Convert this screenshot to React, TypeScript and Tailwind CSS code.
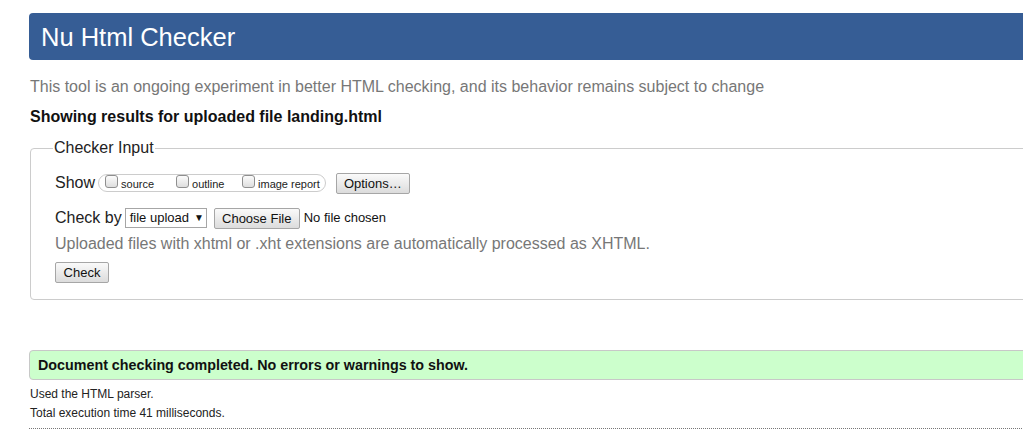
const btn =
  "h-[21px] px-[6px] border border-[#a6a6a6] rounded-[2px] bg-gradient-to-b from-[#fafafa] to-[#dcdcdc] text-[13px] leading-[19px] text-[#111]";

function Box({ label }: { label: string }) {
  return (
    <span className="flex items-center gap-[3px]">
      <span className="inline-block w-[13px] h-[13px] rounded-[3px] border border-[#8f8f8f] bg-gradient-to-b from-[#fcfcfc] to-[#dedede] -mt-[4px]" />
      <span className="text-[11px] leading-[13px] text-[#222] mt-[3px]">{label}</span>
    </span>
  );
}

export default function App() {
  return (
    <div className="w-full h-[435px] overflow-hidden bg-white font-['Liberation_Sans',Arial,sans-serif] text-[#222]">
      <div className="w-[1100px] pl-[29px] pt-[13px]">
        <div className="h-[47px] bg-[#365d95] rounded-[4px] pl-[12px] flex items-center">
          <h1 className="text-[25.5px] leading-[30px] text-white">Nu Html Checker</h1>
        </div>

        <p className="mt-[18px] pl-[1px] text-[16px] leading-[18px] text-[#777]">
          This tool is an ongoing experiment in better HTML checking, and its behavior remains subject to change
        </p>
        <p className="mt-[11px] pl-[1px] text-[16px] leading-[19px] font-bold text-[#111]">
          Showing results for uploaded file landing.html
        </p>

        <fieldset className="mt-[13px] ml-[1px] border border-[#cccccc] rounded-[4px] pl-[24px] pr-[24px] pb-[15px] pt-[15px]">
          <legend className="-ml-[2px] px-[1px] text-[16px] leading-[18px] text-[#222]">Checker Input</legend>

          <div className="flex items-center h-[22px]">
            <span className="text-[16px] leading-[18px] mr-[3px]">Show</span>
            <span className="flex items-center h-[18px] border border-[#cccccc] rounded-full pl-[6px] pr-[5px]">
              <span className="w-[71px]"><Box label="source" /></span>
              <span className="w-[66px]"><Box label="outline" /></span>
              <Box label="image report" />
            </span>
            <button className={btn + " ml-[10px] w-[74px]"}>Options…</button>
          </div>

          <div className="flex items-center h-[22px] mt-[13px]">
            <span className="text-[16px] leading-[18px] mr-[3px]">Check by</span>
            <span className="flex items-center h-[20px] w-[82px] border border-[#a6a6a6] bg-white pl-[4px] text-[13px] leading-[16px] text-[#111]">
              file upload <span className="ml-[5px] text-[10px]">▼</span>
            </span>
            <button className={btn + " ml-[7px] w-[86px]"}>Choose File</button>
            <span className="ml-[4px] text-[13px] leading-[16px] text-[#111]">No file chosen</span>
          </div>

          <p className="mt-[6px] text-[16px] leading-[18px] text-[#777]">
            Uploaded files with xhtml or .xht extensions are automatically processed as XHTML.
          </p>

          <button className={btn + " mt-[9px] w-[54px]"}>Check</button>
        </fieldset>

        <div className="mt-[50px] h-[30px] bg-[#ccffcc] border border-[#c8c8c8] rounded-[4px] pl-[8px] flex items-center">
          <span className="text-[14.3px] leading-[18px] font-bold text-[#111]">
            Document checking completed. No errors or warnings to show.
          </span>
        </div>

        <p className="mt-[5px] pl-[1px] text-[12px] leading-[19px] text-[#222]">Used the HTML parser.</p>
        <p className="pl-[1px] text-[12px] leading-[19px] text-[#222]">Total execution time 41 milliseconds.</p>
        <div className="mt-[5px] border-t border-dotted border-[#777]" />
      </div>
    </div>
  );
}
